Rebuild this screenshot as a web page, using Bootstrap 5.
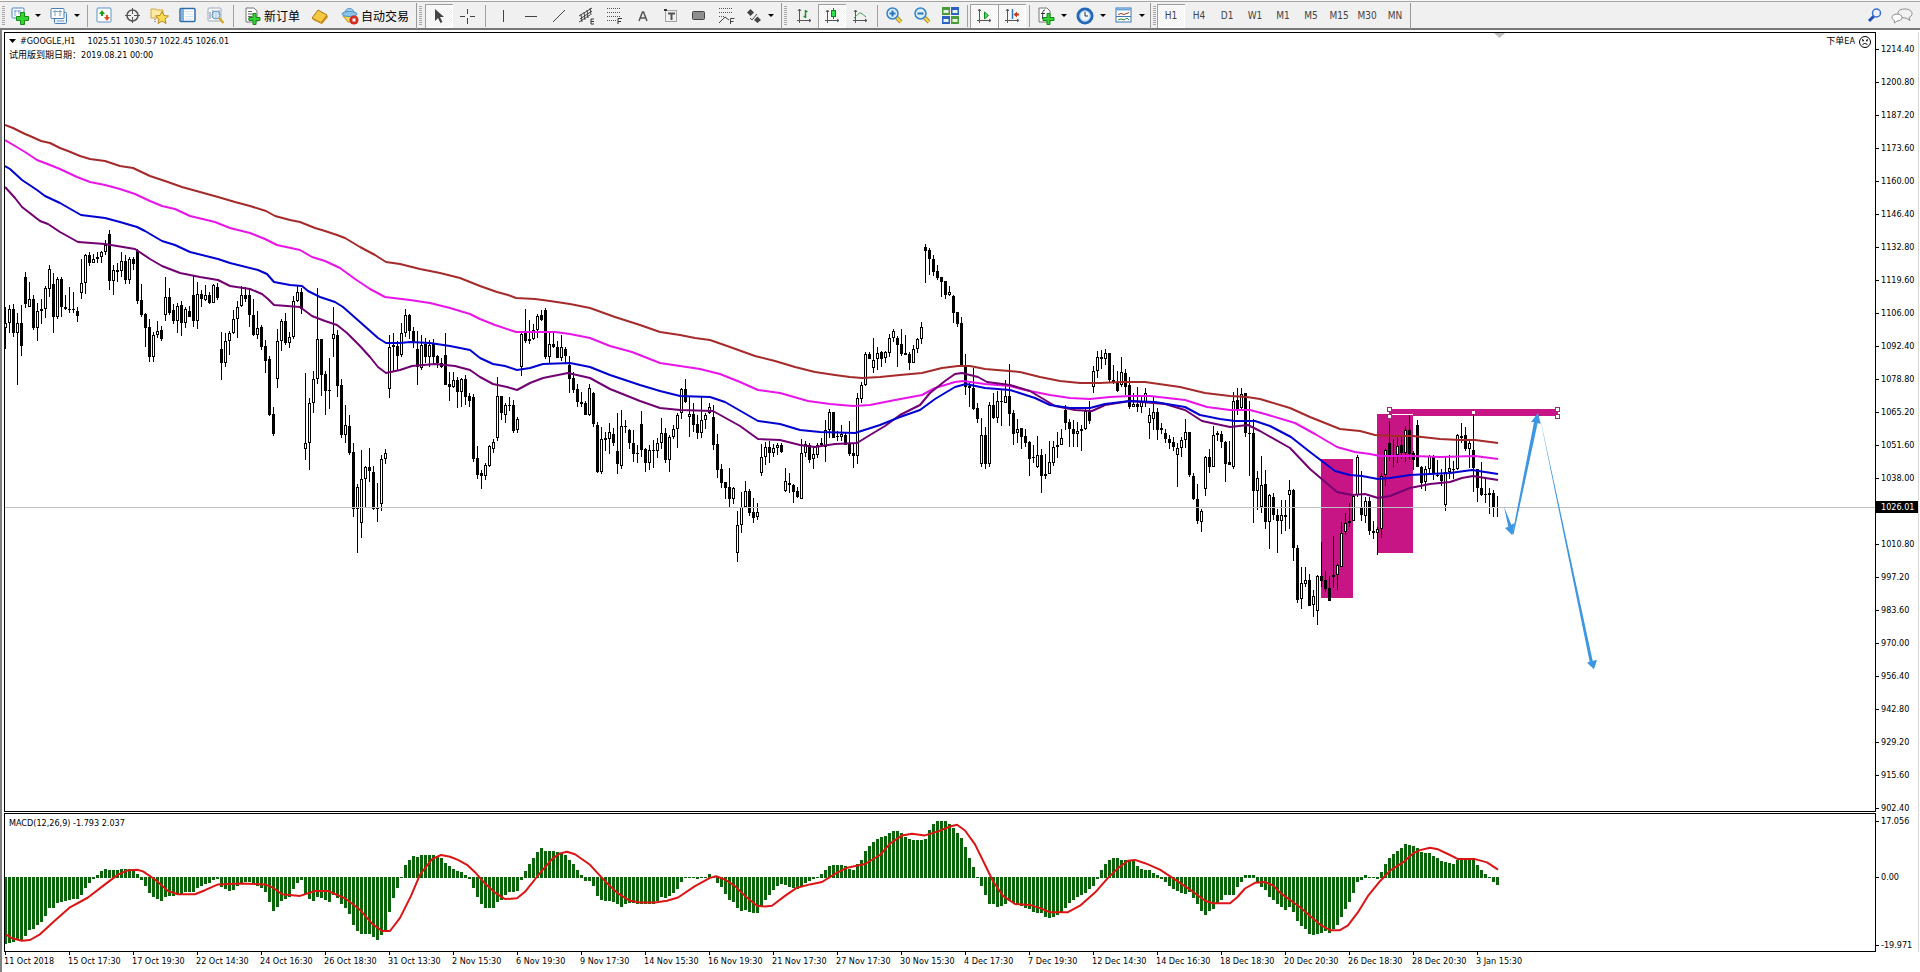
<!DOCTYPE html>
<html lang="zh-CN">
<head>
<meta charset="utf-8">
<meta name="viewport" content="width=device-width, initial-scale=1">
<title>#GOOGLE,H1</title>
<link href="https://cdn.jsdelivr.net/npm/bootstrap@5.3.0/dist/css/bootstrap.min.css" rel="stylesheet">
<style>
  body { font-family: "DejaVu Sans Condensed", "DejaVu Sans", "Noto Sans CJK SC", sans-serif; font-size: 9px; line-height: 12px; color: #000; background: #fff; }
  .toolbar { height: 30px; padding-top: 2px; background: #f0f0f0; border-top: 1px solid #f8f8f8; border-bottom: 2px solid #777; box-shadow: inset 0 1px #a5a5a5; }
  .tool { width: 28px; height: 24px; padding: 0; border: 0; border-radius: 0; flex: none; display: flex; align-items: center; justify-content: center; color: #444; font: 10px/12px "DejaVu Sans Condensed", "DejaVu Sans", sans-serif; }
  .tool svg { display: block; flex: none; }
  .tool.pressed { background: repeating-conic-gradient(#fff 0 25%, #f1f1f1 0 50%) 0 0 / 2px 2px; box-shadow: inset 1px 1px #a0a0a0, inset -1px -1px #fff; }
  .tool.drop { width: 39px; justify-content: flex-start; padding-left: 5px; gap: 6px; }
  .tool.drop::after { content: ""; border: 3px solid transparent; border-top-color: #000; border-bottom: 0; }
  .tool.named { width: auto; padding: 0 6px 0 7px; gap: 2px; font: 12px/16px "Noto Sans CJK SC", sans-serif; color: #000; }
  .rule { width: 6px; height: 22px; flex: none; background: linear-gradient(#a0a0a0, #a0a0a0) 3px 0 / 1px 100% no-repeat; }
  .rule.wide { width: 8px; background-position: 4px 0; }
  .grip { width: 8px; height: 20px; flex: none; background: repeating-linear-gradient(#a8a8a8 0 1px, #f0f0f0 1px 2px) 2px 0 / 3px 100% no-repeat; }
  .grip.slim { width: 6px; }
  .edge { width: 2px; height: 26px; flex: none; border-right: 1px solid #999; }
  .window { border-left: 2px solid #808080; padding: 2px 1px 0 2px; }
  .pane { border: 1px solid #000; min-width: 0; overflow: hidden; }
  .pane svg { display: block; width: 100%; height: 100%; position: absolute; inset: 0; }
  .axis { width: 43px; flex: none; border-right: 1px solid #d8d8d8; }
  .tick { position: relative; padding-left: 5px; height: 12px; white-space: nowrap; }
  .tick::before { content: ""; position: absolute; left: 0; top: 6px; width: 3px; height: 1px; background: #000; }
  .prices { padding-top: 11px; margin-bottom: -2px; }
  .now { left: 0; right: 0; top: 469px; height: 12px; background: #000; color: #fff; padding-left: 5px; }
  .macd { height: 139px; margin-top: 1px; }
  .macd .axis { padding: 2px 0 1px; }
  .upper { flex-grow: 44; } .lower { flex-grow: 55; }
  .caption { left: 4px; top: 3px; }
  .dates { height: 20px; }
  .dates span { width: 64px; flex: none; padding-top: 3px; position: relative; white-space: nowrap; }
  .dates span::before { content: ""; position: absolute; left: 1px; top: 0; width: 1px; height: 3px; background: #000; }
  .title { left: 4px; top: 1px; line-height: 14px; }
  .title svg { position: static; width: 7px; height: 4px; margin-right: 4px; }
  .symbol { margin-right: 12px; }
  .expert { right: 4px; top: 2px; line-height: 13px; }
  .expert svg { position: static; width: 12px; height: 12px; }
</style>
</head>
<body class="vh-100 d-flex flex-column overflow-hidden">

<header class="toolbar d-flex align-items-center">
  <span class="grip slim"></span>
  <button class="btn tool drop" type="button" aria-label="New chart"><svg width="18" height="18"><rect x="1" y="1" width="12" height="10" rx="1" fill="#fff" stroke="#4b86c4"/><path d="M3 4h7M4 3v6M8 3v4" stroke="#79a5d3" fill="none"/><path d="M9.500 5.500h4v4h4v4h-4v4h-4v-4h-4v-4h4z" fill="#35d335" stroke="#128c12"/></svg></button>
  <button class="btn tool drop" type="button" aria-label="Profiles"><svg width="18" height="18"><rect x="4.500" y="5.500" width="12" height="11" rx="1" fill="#e7f1fb" stroke="#4a7fb6"/><rect x="1" y="1.500" width="13" height="10" rx="1" fill="#fff" stroke="#4a7fb6"/><path d="M3 4.500h9M5 3v6M10 3v6M7 14h7" stroke="#7d9dbd"/></svg></button>
  <span class="rule"></span>
  <button class="btn tool" type="button" aria-label="Market watch"><svg width="17" height="17"><rect x="1" y="1" width="14" height="14" rx="1" fill="#fff" stroke="#5b94cb"/><path d="M6 3l3 4H7v2H5V7H3z" fill="#20a020"/><path d="M11 14l-3-4h2V8h2v2h2z" fill="#e05020"/></svg></button>
  <button class="btn tool" type="button" aria-label="Data window"><svg width="17" height="17" fill="none" stroke="#555"><circle cx="8.500" cy="8.500" r="5.500" stroke-width="1.500"/><path d="M8.500 1v6M8.500 10v6M1 8.500h6M10 8.500h6"/></svg></button>
  <button class="btn tool" type="button" aria-label="Navigator"><svg width="20" height="18"><path d="M1 2h5l1 1h6v8H1z" fill="#fbe9a4" stroke="#d1a941"/><path d="M5 12v4" stroke="#555" stroke-dasharray="1"/><path d="M12 4.500l2 4 4.500.500-3.500 3 1 4.500-4-2.500-4 2.500 1-4.500-3.500-3 4.500-.500z" fill="#f9dc55" stroke="#b98b1c"/></svg></button>
  <button class="btn tool" type="button" aria-label="Terminal"><svg width="18" height="17"><rect x="1" y="1.500" width="15" height="13" rx="1" fill="#fff" stroke="#2f6cab" stroke-width="1.500"/><path d="M3.500 2v12" stroke="#7fb0df" stroke-width="3"/><path d="M6 4.500h8M6 7h8M6 9.500h8M6 12h8" stroke="#d8e2ee"/></svg></button>
  <button class="btn tool" type="button" aria-label="Strategy tester"><svg width="18" height="18"><rect x="1" y="1" width="13" height="13" rx="1" fill="#f8f8f8" stroke="#9aabbe"/><path d="M3 12V5M6 11V3M9 12V4M12 8V3" stroke="#7389a4"/><circle cx="9" cy="8" r="4" fill="#c9e3f7" fill-opacity=".7" stroke="#6596c4"/><path d="M12 11l4.500 5" stroke="#d3a72c" stroke-width="2.500"/></svg></button>
  <span class="rule"></span>
  <button class="btn tool named" type="button"><svg width="19" height="18"><path d="M3 1h8l3 3v11H3z" fill="#fff" stroke="#777"/><path d="M5 4.500h4M5 7h6M5 9.500h4M5 12h3" stroke="#666"/><path d="M10 6.500h3v4h4v3h-4v4h-3v-4H6v-3h4z" fill="#35d335" stroke="#128c12"/></svg>新订单</button>
  <button class="btn tool" type="button" aria-label="MetaEditor"><svg width="18" height="16"><path d="M1 10L7 2l9 5-6 8z" fill="#f3c944" stroke="#a87512"/><path d="M1 10l1 2 9 4 6-7-1-2-6 7z" fill="#c78d18"/></svg></button>
  <button class="btn tool named" type="button"><svg width="18" height="18"><path d="M2 9h13l-3 6H7z" fill="#f3d45c" stroke="#c29322"/><path d="M4 6c0-6 9-6 9 0z" fill="#a5d2f0" stroke="#4e91c4"/><ellipse cx="8.500" cy="7" rx="7.500" ry="2.500" fill="#8cc3e9" stroke="#4e91c4"/><circle cx="13" cy="13" r="4.500" fill="#d52c22"/><rect x="11.500" y="11.500" width="3" height="3" fill="#fff"/></svg>自动交易</button>
  <span class="edge"></span><span class="grip"></span>

  <button class="btn tool pressed" type="button" aria-label="Cursor"><svg width="12" height="16"><path d="M2 1v12l3-3 2.500 5 2-1-2.500-5h4z" fill="#444"/></svg></button>
  <button class="btn tool" type="button" aria-label="Crosshair"><svg width="16" height="16"><path d="M8.500 1v5M8.500 10v6M1 8.500h5M11 8.500h5" stroke="#444"/></svg></button>
  <span class="rule wide"></span>
  <button class="btn tool" type="button" aria-label="Vertical line"><svg width="14" height="14"><path d="M7.500 1v12" stroke="#444"/></svg></button>
  <button class="btn tool" type="button" aria-label="Horizontal line"><svg width="14" height="14"><path d="M1 7.500h12" stroke="#444"/></svg></button>
  <button class="btn tool" type="button" aria-label="Trend line"><svg width="14" height="14"><path d="M1 13L13 1" stroke="#444"/></svg></button>
  <button class="btn tool" type="button" aria-label="Equidistant channel"><svg width="18" height="18"><path d="M1 9L14 1M1 15L12 8M3 7l1 8M6 5l1 8M9 3l1 8M12 1l1 7M2 12L14 4" stroke="#444" fill="none"/><path d="M16 12h-3v5h3M13 14.500h3" fill="none" stroke="#333"/></svg></button>
  <button class="btn tool" type="button" aria-label="Fibonacci"><svg width="18" height="18"><path d="M1 1.500h13M1 5.500h13M1 9.500h13M1 13.500h9" stroke="#555" stroke-dasharray="1"/><path d="M12 17v-5.500h4M12 14.500h3" fill="none" stroke="#333"/></svg></button>
  <button class="btn tool" type="button" aria-label="Text"><svg width="12" height="12"><path d="M2 11L5.500 2h1L10 11M3.500 8h5" fill="none" stroke="#555" stroke-width="1.500"/></svg></button>
  <button class="btn tool" type="button" aria-label="Text label"><svg width="14" height="14"><rect x="1.500" y="1.500" width="11" height="11" fill="none" stroke="#555" stroke-dasharray="1"/><path d="M4 4.500h7M7.500 4v7" stroke="#555" stroke-width="2"/><path d="M0 0h3v2H0z" fill="#333"/></svg></button>
  <button class="btn tool" type="button" aria-label="Rectangle"><svg width="14" height="10"><rect x=".5" y=".5" width="12" height="8" rx="1" fill="#8e8e8e" stroke="#444"/></svg></button>
  <button class="btn tool" type="button" aria-label="Fibonacci fan"><svg width="18" height="18"><path d="M1 1.500h14M1 5.500h14M1 9.500h6" stroke="#555" stroke-dasharray="1"/><path d="M1 16l6-6 4 3M12.500 17v-5.500h4M12.500 14.500h3" fill="none" stroke="#444"/></svg></button>
  <button class="btn tool drop" type="button" aria-label="Arrows"><svg width="16" height="16"><path d="M4.500 1L8 4.500 4.500 8 1 4.500zM11.500 15L8 12l3.500-3.500L15 12z" fill="#444"/><path d="M4 10l2 2 5-6" fill="none" stroke="#444"/></svg></button>
  <span class="edge"></span><span class="grip"></span>

  <button class="btn tool" type="button" aria-label="Bar chart"><svg width="16" height="16"><path d="M3.500 1v14M1 12.500h14M2 3l1.500-2L5 3M13 11l2 1.500-2 1.500" fill="none" stroke="#555"/><path d="M9.500 2v8M9.500 3.500h2M7.500 8.500h2" stroke="#218a2f" stroke-width="1.500"/></svg></button>
  <button class="btn tool pressed" type="button" aria-label="Candlesticks"><svg width="16" height="16"><path d="M3.500 2v13M1 12.500h14M2 4l1.500-2L5 4M13 11l2 1.500-2 1.500" fill="none" stroke="#555"/><path d="M9.500 0v11" stroke="#0c8a19"/><rect x="7.500" y="2.500" width="4" height="6" fill="#30e050" stroke="#0c8a19"/></svg></button>
  <button class="btn tool" type="button" aria-label="Line chart"><svg width="16" height="16"><path d="M3.500 2v13M1 12.500h14M2 4l1.500-2L5 4M13 11l2 1.500-2 1.500" fill="none" stroke="#555"/><path d="M2 10c3-2 5-6 7-5s3 3 5 4" fill="none" stroke="#3b9b46"/></svg></button>
  <span class="rule"></span>
  <button class="btn tool" type="button" aria-label="Zoom in"><svg width="17" height="17"><path d="M10 10l5 5" stroke="#b08c1e" stroke-width="4"/><path d="M10 10l5 5" stroke="#f5da5c" stroke-width="2"/><circle cx="6.500" cy="6.500" r="5.500" fill="#d9edfb" stroke="#3683c9" stroke-width="1.500"/><path d="M6.500 3.500v6M3.500 6.500h6" stroke="#2c74b8" stroke-width="2"/></svg></button>
  <button class="btn tool" type="button" aria-label="Zoom out"><svg width="17" height="17"><path d="M10 10l5 5" stroke="#b08c1e" stroke-width="4"/><path d="M10 10l5 5" stroke="#f5da5c" stroke-width="2"/><circle cx="6.500" cy="6.500" r="5.500" fill="#d9edfb" stroke="#3683c9" stroke-width="1.500"/><path d="M3.500 6.500h6" stroke="#2c74b8" stroke-width="2"/></svg></button>
  <button class="btn tool" type="button" aria-label="Tile windows"><svg width="17" height="17"><path d="M0 0h8v8H0zM9 9h8v8H9z" fill="#4a9c38"/><path d="M9 0h8v8H9zM0 9h8v8H0z" fill="#2c62c0"/><path d="M1.500 3h5v3h-5zM10.500 3h5v3h-5zM1.500 12h5v3h-5zM10.500 12h5v3h-5z" fill="#e8f3e8"/></svg></button>
  <span class="rule"></span>
  <button class="btn tool pressed" type="button" aria-label="Auto scroll"><svg width="16" height="16"><path d="M3.500 1v14M1 12.500h14M2 3l1.500-2L5 3M13 11l2 1.500-2 1.500" fill="none" stroke="#555"/><path d="M8.500 4v7l4-3.500z" fill="#4be05c" stroke="#128c22"/></svg></button>
  <button class="btn tool pressed" type="button" aria-label="Chart shift"><svg width="16" height="16"><path d="M3.500 1v14M1 12.500h14M2 3l1.500-2L5 3M13 11l2 1.500-2 1.500" fill="none" stroke="#555"/><path d="M8.500 1v10" stroke="#2c74c8" stroke-width="1.500"/><path d="M9.500 6.500L13 3.500v2h2v2h-2v2z" fill="#c43a18"/></svg></button>
  <span class="rule"></span>
  <button class="btn tool drop" type="button" aria-label="Indicators"><svg width="18" height="18"><path d="M2 1h8l3 3v11H2z" fill="#fff" stroke="#777"/><path d="M8 3c-3 0-2 3-2.500 9M4 6.500h4" stroke="#333" fill="none"/><path d="M10 6.500h3v4h4v3h-4v4h-3v-4H6v-3h4z" fill="#35d335" stroke="#128c12"/></svg></button>
  <button class="btn tool drop" type="button" aria-label="Periods"><svg width="18" height="18"><circle cx="9" cy="9" r="7" fill="#eef7ff" stroke="#2468b8" stroke-width="3"/><circle cx="9" cy="9" r="5" fill="none" stroke="#a9d0f0"/><path d="M9 5v4h3" fill="none" stroke="#333"/></svg></button>
  <button class="btn tool drop" type="button" aria-label="Templates"><svg width="18" height="17"><rect x="1" y="1" width="15" height="14" fill="#fff" stroke="#3b78b5"/><path d="M1.500 2.500h14" stroke="#69a5dc" stroke-width="2"/><path d="M3 7.500l3-1 3 1 5-2" fill="none" stroke="#a03a20"/><path d="M1 9.500h15" stroke="#3b78b5"/><path d="M3 13l3-1 3 1 3-2 2 2" fill="none" stroke="#2a9134"/></svg></button>
  <span class="edge"></span><span class="grip slim"></span>

  <button class="btn tool pressed" type="button">H1</button>
  <button class="btn tool" type="button">H4</button>
  <button class="btn tool" type="button">D1</button>
  <button class="btn tool" type="button">W1</button>
  <button class="btn tool" type="button">M1</button>
  <button class="btn tool" type="button">M5</button>
  <button class="btn tool" type="button">M15</button>
  <button class="btn tool" type="button">M30</button>
  <button class="btn tool" type="button">MN</button>
  <span class="edge"></span>

  <button class="btn tool ms-auto" type="button" aria-label="Search"><svg width="15" height="15"><path d="M2 13l5-5" stroke="#2350b8" stroke-width="3"/><circle cx="9.500" cy="5" r="4" fill="#eef4ff" stroke="#3b6fd0" stroke-width="1.500"/></svg></button>
  <button class="btn tool me-1" type="button" aria-label="Chat"><svg width="22" height="16"><path d="M14 1c4 0 7 2 7 4.500 0 2-1 3-3 4l1 3-4-2.500c-4 0-8-1-8-4.500S10 1 14 1z" fill="#f2f2f2" stroke="#8d8d8d"/><path d="M6 6c3 0 5 1.500 5 3.500S9 13 6 13l-2.500 2v-2.500C2 12 1 11 1 9.500 1 7.500 3 6 6 6z" fill="#fff" stroke="#8d8d8d"/></svg></button>
</header>

<main class="window flex-grow-1 d-flex flex-column">
  <section class="d-flex flex-grow-1">
    <div class="pane flex-grow-1 position-relative">
      <svg id="priceChart" viewBox="5 33 1870 778" preserveAspectRatio="none" role="img" aria-label="#GOOGLE H1">
        <g fill="#c71585" shape-rendering="crispEdges">
          <rect x="1321" y="459" width="32" height="139"/>
          <rect x="1377" y="414" width="36" height="139"/>
          <rect x="1389" y="409" width="169" height="7"/>
          <rect x="1391" y="414" width="22" height="1" fill="#fff"/>
        </g>
        <g id="candles" shape-rendering="crispEdges"></g>
        <path d="M5 507.500H1875" stroke="#c0c0c0" shape-rendering="crispEdges"/>
        <g id="averages" fill="none" stroke-width="2" stroke-linejoin="round" transform="translate(0 -1)"></g>
        <g fill="#fff" stroke="#a0287c" shape-rendering="crispEdges">
          <rect x="1387.500" y="407.500" width="4" height="4"/><rect x="1387.500" y="414.500" width="4" height="4"/>
          <rect x="1555.500" y="407.500" width="4" height="4"/><rect x="1555.500" y="414.500" width="4" height="4"/>
          <rect x="1472" y="411" width="3" height="3" stroke="none"/>
        </g>
        <g fill="#3d96e1" transform="translate(1260 380) scale(.33333)">
          <path d="M732 380L754 434 763 430 757 466 735 444 745 440Z"/>
          <path d="M757 462L822 126 813 126 834 98 842 132 833 129 761 462Z"/>
          <path d="M837 98L998 842 1011 840 1002 868 981 848 989 845Z"/>
        </g>
        <path d="M1494 33h11l-5.500 5z" fill="#c0c0c0"/>
      </svg>
      <div class="title position-absolute">
        <div class="d-flex align-items-center"><svg aria-hidden="true"><path d="M0 0h7L3.500 4z"/></svg><span class="symbol">#GOOGLE,H1</span><span>1025.51 1030.57 1022.45 1026.01</span></div>
        <div>试用版到期日期：2019.08.21 00:00</div>
      </div>
      <div class="expert position-absolute d-flex align-items-center gap-1">下单EA <svg viewBox="0 0 12 12" fill="none" stroke="#000"><circle cx="6" cy="6" r="5.500"/><path d="M3.500 9c1-2 4-2 5 0M3 3.500l2 1M9 3.500l-2 1M4 4v1.500M8 4v1.500"/></svg></div>
    </div>
    <div class="axis position-relative d-flex flex-column">
      <div id="prices" class="prices flex-grow-1 d-flex flex-column justify-content-between"></div>
      <div class="now position-absolute">1026.01</div>
    </div>
  </section>
  <section class="macd d-flex">
    <div class="pane flex-grow-1 position-relative">
      <svg id="macdChart" viewBox="5 814 1870 137" preserveAspectRatio="none" role="img" aria-label="MACD"></svg>
      <div class="caption position-absolute">MACD(12,26,9) -1.793 2.037</div>
    </div>
    <div class="axis d-flex flex-column">
      <span class="tick">17.056</span><i class="upper"></i><span class="tick">0.00</span><i class="lower"></i><span class="tick">-19.971</span>
    </div>
  </section>
  <footer id="dates" class="dates d-flex"></footer>
</main>

<script src="https://cdn.jsdelivr.net/npm/bootstrap@5.3.0/dist/js/bootstrap.bundle.min.js"></script>
<script>
// Each bar: direction (w rising, b falling), high, body top, body bottom, low.
// Levels count thirds of a unit below the base of their block.
const blocks = [
{base:100, bars:`w 620 670 685 748;w 614 628 670 700;b 612 628 698 710;w 640 670 698 855;b 615 670 738 768;b 516 532 612 624;w 546 598 620 620;b 585 598 684 690;w 610 634 684 722;w 598 628 634 672;w 558 564 628 655;w 495 508 566 590;b 520 552 650 698;w 532 538 650 658;b 532 538 622 650;b 584 622 626 630;b 560 626 629 640;b 577 628 629 640;b 622 634 648 665;w 478 550 580 596;w 462 466 550 582;b 456 466 488 498;w 462 478 488 490;w 456 472 478 490;w 452 456 472 488;w 420 436 455 465;b 390 402 542 570;w 495 510 542 585;b 488 510 515 545;w 456 482 514 530;b 465 484 540 552;w 472 478 540 552;b 472 478 492 510;b 446 452 602 612;b 552 600 644 650;b 638 642 684 740;b 657 682 770 785;w 695 704 770 785;w 664 692 704 714;b 678 690 716 722;w 532 592 646 662;b 565 592 638 644;b 612 630 664 672;w 610 618 664 698;b 602 614 668 708;w 622 628 668 684;b 618 634 650 652;b 526 584 664 680;w 546 582 664 686;b 570 582 598 622;w 554 586 600 602;b 576 586 608 612;w 552 556 608 610;b 550 562 594 600;b 696 748 788 840;w 698 724 790 802;w 692 698 724 765;w 630 656 698 702;w 602 620 656 714;w 558 584 618 622;b 562 584 596 606;b 565 584 646 682;b 596 646 704 708;w 632 684 704 718;b 676 682 740 750;b 720 738 782 820;b 768 776 944 948;b 922 942 1002 1008;w 686 722 838 864;w 656 664 722 752;b 638 664 728 734;w 696 712 728 744;w 588 602 712 718;w 556 576 602 606;b 564 576 626 642;w 820 1028 1048 1080;w 894 908 1028 1110;w 812 838 908 938;w 564 718 836 852;b 716 716 824 888;b 812 822 872 945;b 774 870 872 928;w 622 703 716 770;b 690 706 858 890;b 838 856 1004 1014;w 914 976 1004 1028;b 944 978 1058 1064;b 1028 1056 1228 1250;w 1152 1162 1228 1358;w 1050 1138 1268 1313;w 1098 1100 1138 1225;b 1044 1100 1112 1146;b 1098 1116 1228 1230;w 1150 1222 1228 1266;w 1066 1078 1212 1232;w 1048 1060 1078 1092;w 704 740 868 893;b 700 736 740 812;b 722 738 768 812;w 670 698 766 770;w 628 646 698 710;b 642 646 692 718;b 682 692 730 744;b 692 748 802 855;w 704 736 804 810;b 714 732 770 790;w 720 734 770 800;b 716 732 770 795;b 766 768 790 804;b 774 790 802 804;b 700 766 854 856;b 816 852 860 904;w 816 840 860 864;b 830 840 876 924;w 834 838 876 920;b 826 838 890 914;b 880 888 904 922;b 882 892 1076 1086;b 1038 1074 1124 1137`},
{base:220, bars:`b 750 760 767 806;w 728 736 767 780;w 674 678 737 740;w 658 667 686 700;w 472 529 653 662;b 529 529 578 600;w 550 554 584 608;b 530 554 557 572;b 540 555 633 640;w 590 596 630 638;w 335 342 440 467;b 267 340 362 368;b 300 357 362 372;w 312 331 357 360;w 282 287 331 354;b 270 285 300 302;b 264 270 410 416;w 340 373 410 433;b 340 373 382 385;b 362 382 413 413;w 345 382 413 422;b 382 388 408 433;b 408 434 476 518;b 455 474 509 518;b 492 508 545 560;b 516 545 552 560;b 542 550 584 585;w 493 505 584 588;b 516 520 611 620;b 605 614 755 758;w 620 656 755 762;b 636 655 659 692;w 610 636 658 702;b 624 642 668 678;b 578 692 732 762;w 570 618 737 746;b 600 618 621 640;b 626 630 670 688;b 630 668 702 726;b 674 700 702 728;b 573 612 690 712;b 684 688 728 755;w 675 690 728 750;b 660 689 692 745;w 655 668 692 714;w 594 638 668 686;b 625 638 720 728;w 646 650 720 755;w 615 626 650 657;w 578 584 626 684;w 504 508 580 596;b 478 508 545 548;w 532 583 590 650;b 550 582 614 636;b 586 612 638 658;w 532 601 638 654;w 579 585 601 626;w 548 560 580 582;b 555 590 674 690;b 643 672 750 774;b 733 747 788 803;b 785 787 804 838;b 744 802 838 860;w 801 803 838 852;w 874 916 1000 1025;w 816 862 916 938;w 784 814 862 864;b 806 812 878 888;b 834 876 893 910;w 850 875 892 900;w 672 710 758 768;w 666 682 710 734;b 664 682 698 728;w 672 684 698 710;w 670 676 684 704;b 668 676 696 698;w 744 782 812 816;b 758 790 796 820;b 792 796 816 849;b 802 812 832 834;w 656 700 836 836;w 664 672 700 710;b 670 674 720 730;w 680 702 718 746;w 668 674 704 714;b 655 670 674 682;w 600 629 680 726;w 568 577 629 654;b 576 576 654 654;b 632 648 651 662;w 616 642 650 662;b 640 644 674 676;b 603 672 702 708;b 670 700 707 744;w 520 535 707 732;w 486 496 536 550;w 396 403 496 498;b 396 402 416 418;w 354 421 445 458;w 380 399 416 450;b 394 396 416 440;w 394 397 414 430;w 342 354 398 410;w 327 332 354 366;b 348 354 374 440;b 327 373 402 408;b 345 400 406 406;b 396 402 428 449;w 374 386 428 428;w 354 358 386 398;w 306 322 358 372`},
{base:230, bars:`b 42 50 62 158;b 54 60 88 135;b 76 86 126 138;b 106 123 144 150;b 140 142 155 202;b 152 154 194 208;w 168 187 196 198;b 194 198 248 278;b 246 246 281 290;b 262 278 410 410;b 372 408 472 494;b 452 468 474 530;b 415 474 536 540;b 520 534 566 580;w 565 616 702 710;b 590 616 702 716;w 516 525 702 712;b 490 526 564 568;w 482 514 564 580;b 480 514 517 588;w 450 498 518 520;b 402 497 552 588;b 540 548 612 645;w 566 596 610 638;b 594 594 620 658;b 598 617 638 650;b 634 636 686 738;b 645 682 685 700;w 618 674 712 714;b 658 674 738 788;w 672 731 738 746;w 634 697 731 732;w 634 650 698 708;w 607 645 652 684;w 596 625 644 646;b 524 540 578 600;b 568 576 597 652;b 570 596 612 652;w 576 604 611 652;w 584 596 604 662;w 530 542 598 600;b 514 544 573 582;w 408 424 472 488;w 362 382 424 444;b 360 380 388 416;w 357 370 386 404;b 368 370 450 460;b 406 450 456 462;b 424 456 482 487;w 380 426 464 472;b 418 430 470 495;b 440 464 530 536;w 490 522 530 530;b 470 522 532 545;w 496 516 530 548;w 474 488 516 530;w 534 556 580 627;w 500 546 568 600;b 534 546 600 630;b 578 594 600 612;b 598 608 626 640;b 615 626 638 658;b 622 636 650 664;w 640 654 676 770;w 622 631 654 682;w 568 607 631 654;b 606 606 734 742;b 730 738 808 810;b 762 808 874 882;w 838 842 876 906;w 678 680 778 798;b 657 680 710 730;w 587 614 710 712;b 602 610 616 634;b 602 612 636 654;b 634 636 702 755;b 632 696 704 706;w 486 514 710 716;b 474 510 536 556;w 474 492 534 540;b 488 490 610 620;b 514 608 612 738;b 566 610 784 879;w 724 745 784 840;w 678 764 830 848;b 720 762 876 898;w 792 796 876 957;b 790 800 856 870;b 838 854 872 969;w 810 856 872 912;b 810 854 862 902;w 750 781 794 896;b 777 780 954 992;b 944 954 1110 1118;w 1011 1060 1108 1138;w 1010 1051 1061 1072;b 1032 1050 1128 1128;w 1080 1099 1126 1160;w 1035 1039 1142 1184`},
{base:380, bars:`b 486 588 602 620;b 573 600 626 635;b 588 625 664 664;w 468 584 590 625;w 549 554 584 630;w 426 458 560 560;w 400 428 455 466;b 370 424 428 440;w 345 348 424 424;w 226 232 346 350;b 274 381 406 422;w 352 364 407 430;b 352 364 452 464;b 424 452 458 476;w 442 448 458 524;w 280 287 448 474;w 204 210 284 318;b 122 190 228 242;b 178 226 228 262;w 172 197 226 248;b 166 194 220 238;w 138 151 220 245;b 104 151 222 240;b 212 220 240 270;b 120 136 260 260;b 258 260 308 326;w 258 268 306 332;w 226 227 268 284;b 226 227 282 300;b 240 284 286 290;b 268 284 302 318;w 230 276 374 392;w 226 265 277 296;b 244 266 269 296;w 162 166 268 270;w 130 167 175 190;b 140 164 208 214;w 180 190 208 264;b 98 210 264 335;b 268 268 325 366;b 245 325 344 347;b 292 343 346 368;w 325 340 346 402;b 330 340 385 410;b 348 382 385 410`}
];
let x = 5, black = '', white = '';
for (const {base, bars} of blocks) {
  for (const bar of bars.split(';')) {
    const [dir, ...levels] = bar.split(' ');
    const [h, t, b, l] = levels.map(v => Math.round(base + v / 3));
    const body = Math.max(1, b - t);
    black += `M${x} ${h}h1V${l}h-1zM${x - 1} ${t}h3v${body}h-3z`;
    if (dir === 'w' && body > 2) white += `M${x} ${t + 1}h1v${body - 2}h-1z`;
    x += 4;
  }
}
document.getElementById('candles').innerHTML = `<path d="${black}"/><path d="${white}" fill="#fff"/>`;

const averages = {
'#a52a2a': '5,126 13,129 25,135 30,137 41,142 50,144 60,149 68,152 80,157 90,160 105,162 120,167 133,169 150,177 165,182 182,188 200,193 218,198 235,203 250,207 266,212 275,217 290,221 300,223 315,229 325,232 337,236 345,239 360,248 375,256 386,263 400,265 420,270 440,274 460,279 480,287 497,293 508,296 516,299 535,300 550,302 570,305 590,309 615,318 640,326 660,333 680,336 695,339 710,341 730,348 755,357 775,362 795,368 815,373 835,376 850,378 862,379 880,378 900,376 922,374 942,369 958,367 970,367 985,370 1020,373 1040,378 1060,382 1080,384 1100,384 1120,383 1145,383 1180,388 1205,394 1230,397 1247,398 1260,400 1290,409 1310,418 1340,430 1360,432 1375,436 1395,437 1413,437 1440,440 1460,441 1475,441 1498,444',
'#e815e8': '5,141 15,147 25,153 37,161 50,166 60,170 77,178 90,183 105,186 120,190 135,195 150,202 162,207 175,210 190,217 215,223 230,229 250,234 265,240 277,246 300,251 312,258 325,262 340,269 355,280 370,290 385,298 410,301 430,304 450,309 470,315 480,320 495,326 516,333 555,333 570,335 590,339 610,347 632,353 660,364 680,367 700,370 720,375 740,383 758,391 780,394 808,402 830,405 853,407 870,406 890,402 922,396 935,389 955,383 963,382 985,385 1010,387 1025,391 1050,396 1070,399 1090,400 1110,398 1130,397 1150,397 1185,401 1207,408 1230,411 1250,411 1265,415 1295,424 1315,435 1337,448 1355,453 1370,455 1380,457 1413,457 1440,458 1475,457 1498,460',
'#720072': '5,188 15,199 22,208 40,222 48,225 60,233 78,243 105,245 135,250 150,260 162,267 180,274 200,278 218,281 230,287 250,290 262,295 268,300 274,306 300,308 312,317 325,322 337,326 347,334 360,347 370,358 378,368 386,374 400,371 412,367 435,365 455,367 470,371 480,378 493,385 507,388 517,391 530,384 543,379 568,374 590,379 610,390 640,402 660,409 680,411 713,412 740,427 758,440 780,441 800,446 815,448 835,445 857,444 870,436 885,427 900,416 920,406 930,394 945,382 955,375 962,374 978,378 987,383 1010,386 1030,392 1055,407 1075,411 1092,412 1105,406 1130,402 1165,405 1185,411 1202,422 1230,428 1248,426 1260,432 1290,449 1310,470 1337,493 1352,496 1365,495 1378,499 1390,497 1410,489 1430,485 1450,483 1462,479 1473,477 1498,481',
'#0000d0': '5,167 10,170 22,181 37,191 45,197 60,204 81,216 105,219 120,223 137,228 145,232 162,242 175,246 190,253 218,260 230,264 258,271 267,275 274,283 290,286 302,287 308,292 320,298 335,303 343,308 360,323 378,339 386,344 400,344 410,343 430,344 450,347 470,351 480,359 493,365 505,367 517,371 530,369 543,365 570,364 590,368 610,376 640,386 660,392 680,397 710,398 725,403 758,422 780,425 800,431 820,433 855,434 880,426 900,418 920,411 935,400 955,388 966,385 985,389 1010,391 1035,399 1050,406 1070,409 1090,409 1105,405 1130,402 1155,403 1185,408 1200,416 1220,420 1235,422 1255,422 1270,427 1291,438 1310,453 1335,472 1350,476 1362,477 1378,480 1390,479 1410,476 1430,475 1450,474 1472,471 1498,475'
};
document.getElementById('averages').innerHTML = Object.entries(averages).map(([c, p]) => `<polyline stroke="${c}" points="${p}"/>`).join('');

// MACD histogram, positive values hang below the zero line
const unit = 0.8167, zero = 877;
const hist = [82,80,79,77,77,72,64,63,58,54,47,37,37,31,30,29,27,26,26,22,13,7,2,-3,-8,-11,-9,-9,-9,-10,-10,-10,-10,-4,3,11,19,24,26,29,24,23,23,21,20,18,18,18,13,11,8,7,3,2,12,14,16,15,11,8,6,6,8,11,13,18,30,41,36,29,26,24,14,7,3,20,26,29,24,25,27,30,22,25,33,37,45,58,65,69,69,69,73,76,70,64,42,25,13,-1,-15,-22,-26,-25,-27,-27,-28,-27,-26,-24,-18,-14,-11,-8,-7,-3,2,13,24,32,37,37,37,30,27,22,18,18,16,3,-8,-16,-24,-31,-36,-33,-33,-33,-31,-30,-27,-22,-16,-9,-3,4,4,11,23,27,29,29,30,33,36,33,31,31,33,33,33,33,33,29,24,25,23,19,14,6,1,-1,-1,2,1,-1,-4,-1,7,12,20,27,30,37,41,40,42,44,44,36,28,22,15,10,8,9,12,13,14,12,7,4,2,-1,-4,-9,-14,-15,-15,-15,-14,-10,-9,-16,-22,-32,-38,-43,-47,-49,-51,-54,-57,-57,-54,-50,-47,-46,-46,-46,-47,-58,-65,-69,-69,-69,-65,-60,-55,-48,-37,-24,-13,-1,11,21,33,33,36,35,33,29,31,33,35,37,38,42,44,44,48,49,48,46,44,37,31,27,24,22,19,14,11,2,-9,-16,-22,-24,-24,-21,-22,-21,-20,-14,-11,-9,-9,-5,-3,2,6,11,14,16,19,20,18,25,33,41,46,41,38,33,27,21,21,21,12,6,-3,-3,-3,6,12,15,24,28,33,36,40,36,42,53,59,63,69,71,69,68,66,68,63,58,48,38,30,19,6,3,-3,-1,1,2,-7,-16,-24,-29,-33,-36,-41,-40,-38,-36,-31,-30,-30,-26,-24,-20,-19,-18,-16,-22,-24,-24,-24,-21,-15,-9,-4,1,6,9];
const signal = '6,965 12,970 22,973 30,972 40,965 55,948 70,932 88,920 105,904 118,892 127,887 137,886 143,888 155,898 168,912 178,916 195,916 205,911 218,904 240,903 265,904 273,908 282,916 300,918 315,912 328,912 345,921 360,935 372,952 382,961 390,961 400,945 411,918 420,892 432,873 441,868 450,870 458,874 467,880 475,889 485,903 495,914 505,922 517,921 525,913 540,890 552,873 560,866 567,864 575,867 590,880 605,900 618,915 630,924 640,926 655,926 667,924 678,920 695,906 710,896 716,894 725,898 735,906 745,918 757,930 765,931 772,930 785,918 797,908 810,904 822,901 835,891 846,884 865,879 880,868 890,854 902,844 912,842 925,844 938,839 950,833 957,831 965,838 975,855 985,880 993,900 1003,918 1015,928 1030,929 1040,933 1050,938 1068,938 1080,930 1095,914 1108,896 1118,884 1128,875 1135,874 1145,878 1160,886 1180,902 1192,912 1205,924 1213,927 1230,927 1237,920 1245,909 1255,902 1265,901 1273,905 1280,914 1300,932 1320,953 1330,960 1340,960 1348,954 1358,938 1368,918 1380,900 1390,887 1403,877 1413,866 1420,862 1430,859 1438,861 1450,868 1458,873 1475,873 1487,877 1498,886';
const bars = hist.map((v, i) => `M${4 + 4 * i} ${v < 0 ? zero + 1 : zero}h3V${Math.round(zero + .5 + v * unit)}h-3z`).join('');
const line = signal.split(' ').map(p => { const [a, b] = p.split(',').map(Number); return `${a},${(799.5 + (b - 800) * unit).toFixed(1)}`; }).join(' ');
document.getElementById('macdChart').innerHTML = `<path d="${bars}" fill="#0a640a" shape-rendering="crispEdges"/><polyline points="${line}" fill="none" stroke="#dc1414" stroke-width="2" stroke-linejoin="round"/>`;

// The level next to the current price keeps its tick but has no label
document.getElementById('prices').innerHTML = '1214.40,1200.80,1187.20,1173.60,1160.00,1146.40,1132.80,1119.60,1106.00,1092.40,1078.80,1065.20,1051.60,1038.00,,1010.80,997.20,983.60,970.00,956.40,942.80,929.20,915.60,902.40'.split(',').map(p => `<span class="tick">${p}</span>`).join('');
document.getElementById('dates').innerHTML = '11 Oct 2018,15 Oct 17:30,17 Oct 19:30,22 Oct 14:30,24 Oct 16:30,26 Oct 18:30,31 Oct 13:30,2 Nov 15:30,6 Nov 19:30,9 Nov 17:30,14 Nov 15:30,16 Nov 19:30,21 Nov 17:30,27 Nov 17:30,30 Nov 15:30,4 Dec 17:30,7 Dec 19:30,12 Dec 14:30,14 Dec 16:30,18 Dec 18:30,20 Dec 20:30,26 Dec 18:30,28 Dec 20:30,3 Jan 15:30'.split(',').map(d => `<span>${d}</span>`).join('');
</script>
</body>
</html>
